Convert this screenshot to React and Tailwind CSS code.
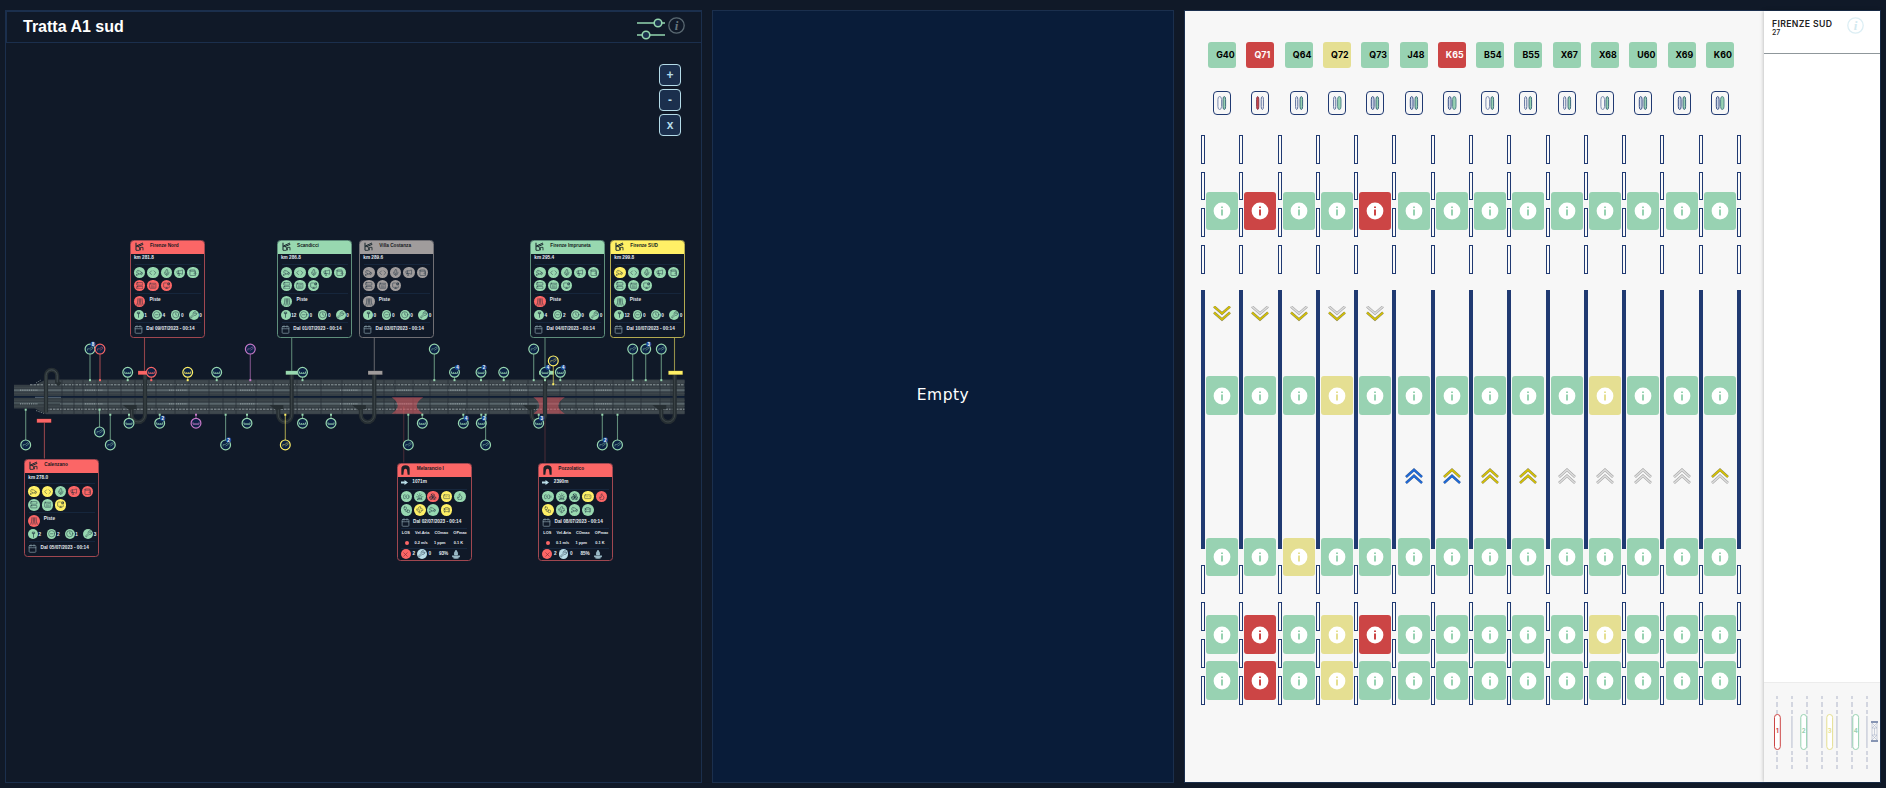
import React from "react";
import {
  Cctv, Code, Mic, Megaphone, Wallet, Server, Keyboard, MonitorCog, Clock, Wrench,
  CircleMinus, Calendar, BatteryCharging, Siren, Boxes, RectangleEllipsis, Flame,
  Workflow, Fan, CarFront, X,
} from "lucide-react";

const HEX = { g: "#98d8b0", r: "#fb6666", y: "#fff066", n: "#a09c9c", p: "#c678c8" };
const FILL = { g: "bg-[#98d8b0]", r: "bg-[#fb6666]", y: "bg-[#fff066]", n: "bg-[#a09c9c]", b: "bg-[#b9dde8]" };
const EDGE = { g: "border-[#5f8f7c]", r: "border-[#a04750]", y: "border-[#b3aa50]", n: "border-[#706f74]" };

const GATES = [
  { x: 130, y: 240, c: "r", name: "Firenze Nord", km: "km 281.8", icons: "gggggrrr", road: "r", counts: [1, 4, 0, 0], date: "09/07/2023" },
  { x: 277, y: 240, c: "g", name: "Scandicci", km: "km 286.8", icons: "gggggggg", road: "g", counts: [12, 0, 0, 0], date: "01/07/2023" },
  { x: 359.3, y: 240, c: "n", name: "Villa Costanza", km: "km 289.6", icons: "nnnnnnnn", road: "n", counts: [0, 0, 0, 0], date: "03/07/2023" },
  { x: 530.3, y: 240, c: "g", name: "Firenze Impruneta", km: "km 295.4", icons: "gggggggg", road: "r", counts: [4, 2, 0, 0], date: "04/07/2023" },
  { x: 610.3, y: 240, c: "y", name: "Firenze SUD", km: "km 299.8", icons: "yggggggg", road: "g", counts: [12, 0, 0, 0], date: "10/07/2023" },
  { x: 24.3, y: 459.3, c: "r", name: "Calenzano", km: "km 278.0", icons: "yygrrggy", road: "r", counts: [2, 2, 1, 3], date: "05/07/2023" },
];
const TUNNELS = [
  { x: 396.8, y: 463.3, name: "Melarancio I", len: "1071m", icons: "ggryggygy", date: "02/07/2023", air: "0.2 m/s", pct: "93%" },
  { x: 538.3, y: 463.3, name: "Pozzolatico", len: "2390m", icons: "gggyryggg", date: "08/07/2023", air: "0.1 m/s", pct: "85%" },
];
const GATE_ICONS = [Cctv, Code, Mic, Megaphone, Wallet, Server, Keyboard, MonitorCog];
const TUNNEL_ICONS = [BatteryCharging, Siren, Boxes, RectangleEllipsis, Flame, Workflow, Fan, Cctv, CarFront];

function Dot({ c, icon: Icon, size = "size-[11.6px]" }) {
  return (
    <span className={`${FILL[c]} ${size} flex shrink-0 items-center justify-center rounded-full text-[#142838]/70`}>
      <Icon size={7.5} strokeWidth={2} />
    </span>
  );
}

function RoadIcon({ size = 8 }) {
  return (
    <svg width={size} height={size} viewBox="0 0 24 24" fill="none" stroke="currentColor" strokeWidth="2.4">
      <path d="M2 23Q6 14 6 1M8.500 23Q11 14 10 1M15.500 23Q13 14 14 1M22 23Q18 14 18 1" />
    </svg>
  );
}
function PoleIcon() {
  return (
    <svg width="7" height="7" viewBox="0 0 24 24" fill="none" stroke="currentColor" strokeWidth="3">
      <path d="M12 23V8M8 4h8v5H8z" />
    </svg>
  );
}
function GateGlyph() {
  return (
    <svg width="9" height="9" viewBox="0 0 27 27" className="text-[#1c2a30]">
      <path d="M3 2v23M3 13h8" fill="none" stroke="currentColor" strokeWidth="3.2" />
      <path d="M4 12 24 3M10 13 25 7" fill="none" stroke="currentColor" strokeWidth="3" />
      <path d="M8 14h4l3 10h-3M16 25v-9h8v9M3 25h9" fill="none" stroke="currentColor" strokeWidth="2.6" />
    </svg>
  );
}
function TunnelGlyph() {
  return (
    <svg width="9" height="10" viewBox="0 0 27 30">
      <path fill="#1c1f26" fillRule="evenodd" d="M1 29V12Q1 1 13.500 1T26 12V29H20L18 14Q13.500 8 9 14L7 29Z" />
    </svg>
  );
}

function CardShell({ item, c, glyph, children }) {
  return (
    <div
      className={`absolute flex h-[98.5px] w-[75px] flex-col overflow-hidden rounded-[3.5px] border ${EDGE[c]} bg-[#101928] text-[4.7px] leading-none font-bold text-[#e4eaf0]`}
      style={{ left: item.x - 6, top: item.y - 43.5 }}
    >
      <div className={`-mx-px -mt-px flex h-[14px] shrink-0 items-center ${FILL[c]} pl-[4.5px] text-[#141a22]`}>
        {glyph}
        <span className="ml-[6.5px]">{item.name}</span>
      </div>
      {children}
    </div>
  );
}

const RULE = "mx-[3.5px] border-t border-[#16263c]";

function GateCard({ g }) {
  return (
    <CardShell item={g} c={g.c} glyph={<GateGlyph />}>
      <div className="flex h-[10.5px] items-center pl-[3px]">{g.km}</div>
      <div className={RULE} />
      <div className="mt-[1.5px] grid grid-cols-[repeat(5,13.33px)] gap-y-[1.7px] pl-[2.9px]">
        {GATE_ICONS.map((I, i) => <Dot key={i} c={g.icons[i]} icon={I} />)}
      </div>
      <div className={`mt-[1.2px] ${RULE}`} />
      <div className="mt-[2.2px] flex items-center pl-[2.9px]">
        <span className={`${FILL[g.road]} flex size-[11.6px] items-center justify-center rounded-full text-[#142838]/70`}><RoadIcon /></span>
        <span className="-mt-[2px] ml-[4px]">Piste</span>
      </div>
      <div className="mt-[2.6px] grid grid-cols-[repeat(4,18.4px)] pl-[2.9px]">
        {[PoleIcon, CircleMinus, Clock, Wrench].map((I, i) => (
          <span key={i} className="flex items-center">
            <Dot c="g" icon={I} size="size-[9.8px]" />
            <span className="mt-[3px] ml-[0.5px]">{g.counts[i]}</span>
          </span>
        ))}
      </div>
      <div className={`mt-[2px] ${RULE}`} />
      <DateRow date={g.date} tall />
    </CardShell>
  );
}

function DateRow({ date, tall }) {
  return (
    <div className={`flex items-center pl-[2.8px] whitespace-nowrap ${tall ? "h-[13px]" : "h-[11px]"}`}>
      <Calendar size={9} strokeWidth={1.8} className="shrink-0 text-[#8aa3ad]" />
      <span className="ml-[3.5px]">Dal {date} - 00:14</span>
    </div>
  );
}

function TunnelCard({ t }) {
  return (
    <CardShell item={t} c="r" glyph={<TunnelGlyph />}>
      <div className="flex h-[12px] items-center pl-[3px]">
        <svg width="7" height="5" viewBox="0 0 14 10"><path d="M0 3h7V0l7 5-7 5V7H0z" fill="#b9dde8" /></svg>
        <span className="ml-[4.5px]">{t.len}</span>
      </div>
      <div className={RULE} />
      <div className="mt-[1px] grid grid-cols-[repeat(5,13.33px)] gap-y-[1.7px] pl-[2.9px]">
        {TUNNEL_ICONS.map((I, i) => <Dot key={i} c={t.icons[i]} icon={I} />)}
      </div>
      <div className="mt-[1.5px]"><DateRow date={t.date} /></div>
      <div className={RULE} />
      <div className="mt-[2px] flex justify-between px-[4px] text-[3.9px]">
        <span>LOS</span><span>Vel.Aria</span><span>COmax</span><span>OPmax</span>
      </div>
      <div className="mt-[6px] grid grid-cols-[10px_1fr_1fr_1fr] items-center pr-[3px] pl-[4px] text-center text-[3.9px]">
        <span className="mx-auto size-[4px] rounded-full bg-[#fb6666]" />
        <span>{t.air}</span><span>1 ppm</span><span>0.1 K</span>
      </div>
      <div className={`mt-[2.6px] ${RULE}`} />
      <div className="mt-[0.5px] flex items-center pl-[3px]">
        <span className="flex size-[9.8px] items-center justify-center rounded-full bg-[#fb6666] text-[#7e2733]"><X size={7} /></span>
        <span className="w-[6.5px] text-center">2</span>
        <Dot c="b" icon={Wrench} size="size-[9.8px]" />
        <span className="w-[6px] text-center">0</span>
        <span className="ml-[6px]">{t.pct}</span>
        <svg className="ml-[4px]" width="8" height="9" viewBox="0 0 16 18"><path d="M8 0Q13 6 11 10H5Q3 6 8 0ZM1 11v3q7 4 14 0v-3M3 17h10" fill="#b9dde8" stroke="#b9dde8" strokeWidth="1" fillOpacity=".8" /></svg>
      </div>
    </CardShell>
  );
}

/* kind: c = camera, s = sign; badge holds the number shown on the marker */
const PINS = [
  [90, 349.6, "g", "c", 380.5, 8], [100, 349.6, "r", "c", 380.5], [250.3, 349.6, "p", "c", 380.5],
  [434.3, 349.6, "g", "c", 380.5], [533.7, 349.6, "g", "c", 380.5], [632.7, 349.6, "g", "c", 380.5],
  [645.7, 349.6, "g", "c", 380.5, 3], [661.3, 349.6, "g", "c", 380.5],
  [127.7, 372.8, "g", "s", 380.5], [151.3, 372.8, "r", "s", 380.5], [187.7, 372.8, "y", "s", 380.5],
  [216.7, 372.8, "g", "s", 380.5], [302.5, 372.8, "g", "s", 380.5], [454.5, 372.8, "g", "s", 380.5, 4],
  [481, 372.8, "g", "s", 380.5, 2], [503.7, 372.8, "g", "s", 380.5], [545, 372.8, "g", "s", 380.5, 4],
  [560.3, 372.8, "g", "s", 380.5, 4], [553.3, 361.4, "y", "c", 384.5],
  [129, 423.7, "g", "s", 415], [159.7, 423.7, "g", "s", 415, 2], [196, 423.7, "p", "s", 415],
  [247, 423.7, "g", "s", 415], [302.5, 423.7, "g", "s", 415], [331, 423.7, "g", "s", 415],
  [422.3, 423.7, "g", "s", 415], [463.3, 423.7, "g", "s", 415, 4], [481.3, 423.7, "g", "s", 415, 2],
  [538.7, 423.7, "g", "s", 415, 3], [99.5, 432.4, "g", "c", 410],
  [25.7, 445.4, "g", "c", 410], [110.3, 445.4, "g", "c", 415], [225.6, 445.4, "g", "c", 415, 2],
  [285.3, 445.4, "y", "c", 415], [408.3, 445.4, "g", "c", 415], [485.6, 445.4, "g", "c", 415],
  [602.3, 445.4, "g", "c", 415, 2], [617.5, 445.4, "g", "c", 415],
];

function Pin({ p }) {
  const [x, y, c, kind, end, badge] = p;
  const col = HEX[c];
  return (
    <g>
      <line x1={x} x2={x} y1={y} y2={end} stroke={col} strokeOpacity=".6" strokeWidth="1.1" />
      <rect x={x - 1} y={end - 0.8} width="2" height="2" fill={col} />
      <circle cx={x} cy={y} r="4.9" fill="#0c2245" stroke={col} strokeWidth="1.2" />
      {kind === "s" ? (
        <path d={`M${x - 3} ${y - 0.8}v1.800h6v-1.800M${x - 1} ${y}v1M${x + 1} ${y}v1`} fill="none" stroke={col} strokeWidth=".8" />
      ) : (
        <path d={`M${x - 2.5} ${y + 1.5}v-1.800h2l2.500-2 1 1.500-3 2`} fill="none" stroke={col} strokeOpacity=".65" strokeWidth=".7" />
      )}
      {badge && (
        <g>
          <circle cx={x + 3} cy={y - 5} r="2.6" fill="#1c4a94" />
          <text x={x + 3} y={y - 3.4} textAnchor="middle" fontSize="4.5" fontWeight="700" fill="#fff">{badge}</text>
        </g>
      )}
    </g>
  );
}

const RAMPS = [145, 291.7, 374.3, 545, 674.7];
const BOOTHS = [
  [138, 371.3, "r", 144.5, 338, 372], [285.7, 371.3, "g", 291.7, 338, 372], [368, 371.3, "n", 374.3, 338, 372],
  [539, 371.3, "g", 545, 338, 372], [668.3, 371.3, "y", 674.5, 338, 372], [36.8, 419.3, "r", 44.4, 423, 459],
];
const SEAMS = [62, 74, 83, 97, 108, 121, 135, 156, 175, 189, 209, 223, 236, 256, 273, 297, 321, 342, 362, 384, 395, 413, 430, 448, 467, 489, 510, 528, 560, 576, 594, 613, 625, 641, 660, 671];

function RoadMap() {
  return (
    <svg className="absolute inset-0 h-full w-full" viewBox="6 43.500 695 739" fontFamily="Liberation Sans, sans-serif">
      <path d="M14 385.200H35L46 380H684.500V396.800H14Z" fill="#353e44" />
      <path d="M14 398H684.500V414.800H46L35 409H14Z" fill="#353e44" />
      <rect x="46" y="380.8" width="638.5" height="3" fill="#3f484e" />
      <rect x="46" y="411.2" width="638.5" height="3" fill="#3f484e" />
      <path d="M14 390.800H684.500M60 404.200H684.500" stroke="#59666b" strokeWidth="1.9" />
      <path d="M14 403.500H60" stroke="#59666b" strokeWidth="1.2" />
      <path d="M14 388H684.500M14 406.800H684.500M14 394H684.500M14 400.800H684.500" stroke="#3d464b" strokeWidth="1.6" />
      <path d="M30 385.300H684.500M46 409.700H684.500" stroke="#9aa5a8" strokeWidth=".9" strokeDasharray="2.5 1" />
      {[20, 85, 169, 240, 340, 395, 448, 510, 594].map((x) => (
        <path key={x} d={`M${x} 390.800h18M${x} 404.200h18`} stroke="#7f8b8f" strokeWidth="1.6" strokeDasharray="1.2 1" />
      ))}
      <path d="M14 397.400H684.500" stroke="#0b1c36" strokeWidth="1.3" />
      {SEAMS.map((x) => <path key={x} d={`M${x} 380V396.600M${x} 398.200V414.800`} stroke="#283139" strokeWidth=".8" />)}
      <path d="M36 383.500L41 380.500M36 411L44 414" stroke="#6a767a" strokeWidth="1" strokeDasharray="1.5 1" />
      <path d="M35 397.800H61" stroke="#6d7f8c" strokeWidth=".8" />

      {[391.7, 533.3].map((x) => (
        <path key={x} d={`M${x} 397.800H${x + 31.6}Q${x + 25} 402 ${x + 25} 406T${x + 31.6} 414.300H${x}Q${x + 6} 410 ${x + 6} 406T${x} 397.800Z`} fill="#d8545c" fillOpacity=".55" />
      ))}
      <path d="M403.700 407V463M545 407V463" stroke="#fb6666" strokeOpacity=".2" strokeWidth="1.3" />

      {RAMPS.map((x) => (
        <g key={x} fill="none">
          <path d={`M${x} 374V415.500a6.700 7 0 0 1-13.400 0V410l-3-2.500h8`} stroke="#262e32" strokeWidth="4.2" />
          <path d={`M${x} 374V415.500a6.700 7 0 0 1-13.400 0V410`} stroke="#41494c" strokeWidth=".9" />
        </g>
      ))}
      <g fill="none">
        <path d="M46 413V376a5.600 5.600 0 0 1 11.200 0V383l3 2" stroke="#262e32" strokeWidth="4.2" />
        <path d="M46 413V376a5.600 5.600 0 0 1 11.200 0V383" stroke="#4b5558" strokeWidth=".9" />
      </g>

      {BOOTHS.map(([x, y, c, lx, y1, y2]) => (
        <g key={lx}>
          <path d={`M${lx} ${y1}V${y2}`} stroke={HEX[c]} strokeOpacity=".55" strokeWidth="1.1" />
          <rect x={x} y={y} width="14.5" height="4" fill={HEX[c]} stroke="#000" strokeOpacity=".35" strokeWidth=".5" />
        </g>
      ))}
      {PINS.map((p, i) => <Pin key={i} p={p} />)}
    </svg>
  );
}

function MapPanel() {
  return (
    <section className="flex w-[697px] shrink-0 flex-col border border-[#1b2f4d] font-['Liberation_Sans',Arial,sans-serif]">
      <header className="flex h-[32px] shrink-0 items-center border-t border-b border-l border-[#1b2f4d] pr-[16px] pl-[16px]">
        <h1 className="text-[16px] leading-none font-bold text-white">Tratta A1 sud</h1>
        <svg className="mt-[3px] ml-auto" width="28" height="22" viewBox="0 0 28 22" fill="#1b2f4d" stroke="#93d5ae" strokeWidth="1.6">
          <path d="M0 5H28M0 17H28" />
          <circle cx="21" cy="5" r="3.8" />
          <circle cx="9" cy="17" r="3.8" />
        </svg>
        <svg className="-mt-[3px] ml-[3px]" width="17" height="17" viewBox="0 0 17 17">
          <circle cx="8.5" cy="8.5" r="7.7" fill="none" stroke="#5a6972" strokeWidth="1.3" />
          <text x="8.5" y="13" textAnchor="middle" fontFamily="Liberation Serif, serif" fontStyle="italic" fontWeight="700" fontSize="13" fill="#65757e">i</text>
        </svg>
      </header>
      <div className="relative grow">
        <RoadMap />
        {GATES.map((g) => <GateCard key={g.name} g={g} />)}
        {TUNNELS.map((t) => <TunnelCard key={t.name} t={t} />)}
        <div className="absolute top-[21px] right-[20px] flex flex-col gap-[3px]">
          {["+", "-", "x"].map((s) => (
            <button key={s} className="flex size-[22px] items-center justify-center rounded-[4px] border border-[#b4dbe8] bg-[#1b2f4d] text-[12px] leading-none font-bold text-[#b4dbe8]">{s}</button>
          ))}
        </div>
      </div>
    </section>
  );
}

const LANES = [
  { id: "G40", c: "g", t: "ggggg", m: "wg", down: "yy" },
  { id: "Q71", c: "r", t: "rggrr", m: "rn", down: "ny" },
  { id: "Q64", c: "g", t: "ggygg", m: "ng", down: "ny" },
  { id: "Q72", c: "y", t: "gygyy", m: "nG", down: "ny" },
  { id: "Q73", c: "g", t: "rggrg", m: "bg", down: "ny" },
  { id: "J48", c: "g", t: "ggggg", m: "bg", up: "bb" },
  { id: "K65", c: "r", t: "ggggg", m: "bG", up: "yb" },
  { id: "B54", c: "g", t: "ggggg", m: "wg", up: "yy" },
  { id: "B55", c: "g", t: "ggggg", m: "ng", up: "yy" },
  { id: "X67", c: "g", t: "ggggg", m: "ng", up: "nn" },
  { id: "X68", c: "g", t: "gygyg", m: "wg", up: "nn" },
  { id: "U60", c: "g", t: "ggggg", m: "bg", up: "nn" },
  { id: "X69", c: "g", t: "ggggg", m: "bg", up: "nn" },
  { id: "K60", c: "g", t: "ggggg", m: "bG", up: "yn" },
];
const TILE = { g: "bg-[#98d2b2]", r: "bg-[#cc4545]", y: "bg-[#e5df92]" };
const TILE_HEX = { g: "#98d2b2", r: "#cc4545", y: "#e5df92" };
const ARROW = { y: ["#d9c400", "#8f8a50"], n: ["#dcdcdc", "#a3a3a3"], b: ["#1a6be0", "#3d5f95"] };
/* capsule width, fill, stroke */
const CAPSULE = {
  w: [3.6, "#f7f7f7", "#6f80a8"],
  n: [2.2, "#f7f7f7", "#4a5f92"],
  b: [2.8, "#c9d2e4", "#2a447c"],
  r: [2.2, "#cc4545", "#7d3048"],
  g: [2.6, "#98d2b2", "#2f5c74"],
  G: [3.4, "#98d2b2", "#4c7f88"],
};

function Capsules({ kinds }) {
  return (
    <svg width="10" height="14" viewBox="0 0 10 14">
      {[...kinds].map((k, i) => {
        const [w, fill, stroke] = CAPSULE[k];
        return <rect key={i} x={(i ? 7.3 : 2.7) - w / 2} y=".5" width={w} height="13" rx={w / 2} ry="3" fill={fill} stroke={stroke} strokeWidth=".9" />;
      })}
    </svg>
  );
}

function Tile({ c, cls }) {
  return (
    <div className={`${TILE[c]} ${cls} flex w-[32px] shrink-0 items-center justify-center rounded-[3px]`}>
      <svg width="18" height="18" viewBox="0 0 18 18">
        <circle cx="9" cy="9" r="8.4" fill="#fff" />
        <path d="M8 4.500h2v1.500H8zM8 7.500h2v6H8z" fill={TILE_HEX[c]} />
      </svg>
    </div>
  );
}

function Chevrons({ colors, up }) {
  const d = up ? "M1 9 9 1.800 17 9" : "M1 .5 9 7.500 17 .5";
  return (
    <svg width="18" height="16" viewBox="0 0 18 16" fill="none">
      {[0, 1].map((i) => (
        <g key={i} transform={`translate(0 ${i * 6})`}>
          <path d={d} stroke={ARROW[colors[i]][1]} strokeWidth="2.6" />
          <path d={d} stroke={ARROW[colors[i]][0]} strokeWidth="1.6" />
        </g>
      ))}
    </svg>
  );
}

function Divider() {
  const seg = "w-[4px] shrink-0 border border-[#203a72] bg-[#fafafa]";
  return (
    <div className="flex w-[4px] shrink-0 flex-col pt-[124px]">
      <div className={`${seg} h-[29px]`} />
      <div className={`${seg} mt-[8px] h-[28px]`} />
      <div className={`${seg} mt-[8px] h-[29px]`} />
      <div className={`${seg} mt-[8px] h-[29px]`} />
      <div className="mt-[16px] h-[259px] w-[4px] shrink-0 bg-[#203a72]" />
      <div className={`${seg} mt-[16px] h-[29px]`} />
      <div className={`${seg} mt-[8px] h-[29px]`} />
      <div className={`${seg} mt-[8px] h-[29px]`} />
      <div className={`${seg} mt-[8px] h-[29px]`} />
    </div>
  );
}

function Lane({ lane }) {
  return (
    <div className="flex w-[34.29px] shrink-0 flex-col items-center pt-[31px]">
      <div className={`${TILE[lane.c]} flex h-[26px] w-[28px] shrink-0 items-center rounded-[3px] pl-[8px] text-[8.8px] leading-none font-bold tracking-[0.01em] ${lane.c === "r" ? "text-white" : "text-black"}`}>{lane.id}</div>
      <div className="mt-[23px] flex h-[24px] w-[18px] shrink-0 items-center justify-center rounded-[4px] border border-[#203a72]">
        <Capsules kinds={lane.m} />
      </div>
      <Tile c={lane.t[0]} cls="mt-[77px] h-[38px]" />
      <div className="mt-[76px] h-[17px] shrink-0">{lane.down && <Chevrons colors={lane.down} />}</div>
      <Tile c={lane.t[1]} cls="mt-[53px] h-[39px]" />
      <div className="mt-[53px] h-[16px] shrink-0">{lane.up && <Chevrons colors={lane.up} up />}</div>
      <Tile c={lane.t[2]} cls="mt-[54px] h-[38px]" />
      <Tile c={lane.t[3]} cls="mt-[39px] h-[39px]" />
      <Tile c={lane.t[4]} cls="mt-[7px] h-[39px]" />
    </div>
  );
}

function LegendSketch() {
  const xs = [13, 28, 43, 58, 73, 88, 103];
  const pills = [[10, "#cc4545"], [36.3, "#98d2b2"], [62.3, "#e5df92"], [88.3, "#98d2b2"]];
  return (
    <svg width="116" height="99" viewBox="0 0 116 99" fontFamily="Inter, sans-serif">
      {xs.map((x, i) => (
        <g key={x} fill="#d3d6e0">
          {[[13, 3], [19, 5], [27, 4], [68, 4], [74, 5], [82, 4]].map(([y, h]) => <rect key={y} x={x - 1} y={y} width="2" height={h} />)}
          {i > 0 && <rect x={x - 1} y="33" width="1.8" height="32" />}
        </g>
      ))}
      {pills.map(([x, c], i) => (
        <g key={x}>
          <rect x={x + 0.5} y="31.5" width="5.8" height="35" rx="2.9" fill="#fff" stroke={c} />
          <text x={x + 3.4} y="50" textAnchor="middle" fontSize="6" fontWeight="700" fill={c}>{i + 1}</text>
        </g>
      ))}
      <g stroke="#a9b3c8" fill="none">
        <path d="M107 39h7M107 58h7" stroke="#8795b3" strokeWidth="2" />
        <path d="M108 40v17M113 40v17M108 45h5M108 52h5M108 40l5 5M113 40l-5 5M108 52l5 5M113 52l-5 5M110.500 45v7" strokeWidth=".6" />
      </g>
    </svg>
  );
}

function StationPanel() {
  return (
    <section className="flex w-[697px] shrink-0 border border-[#1b2f4d] bg-[#f7f7f7] font-['Inter',sans-serif]">
      <div className="flex grow overflow-hidden pl-[16px]">
        {LANES.map((l) => (
          <React.Fragment key={l.id}>
            <Divider />
            <Lane lane={l} />
          </React.Fragment>
        ))}
        <Divider />
      </div>
      <aside className="flex w-[116px] shrink-0 flex-col bg-white shadow-[0_0_4px_rgba(0,0,0,0.3)]">
        <div className="flex h-[43px] shrink-0 justify-between border-b border-[#8f979b] pt-[9px] pr-[16px] pl-[8px] text-[#222]">
          <div>
            <div className="text-[8.7px] leading-[9px] font-semibold tracking-[0.04em] whitespace-nowrap">FIRENZE SUD</div>
            <div className="text-[7px] leading-[8px] font-medium">27</div>
          </div>
          <svg className="-mt-[3px]" width="17" height="17" viewBox="0 0 17 17">
            <circle cx="8.5" cy="8.5" r="7.7" fill="none" stroke="#dceef4" strokeWidth="1.3" />
            <text x="8.5" y="13" textAnchor="middle" fontFamily="Liberation Serif, serif" fontStyle="italic" fontWeight="700" fontSize="13" fill="#d3e9f0">i</text>
          </svg>
        </div>
        <div className="grow" />
        <div className="h-[100px] shrink-0 border-t border-[#ececec] bg-[#f7f7f7]"><LegendSketch /></div>
      </aside>
    </section>
  );
}

export default function App() {
  return (
    <main className="flex h-[788px] w-[1886px] gap-[10px] overflow-hidden bg-[#101928] pt-[10px] pb-[5px] pl-[5px]">
      <MapPanel />
      <section className="flex w-[462px] shrink-0 items-center justify-center border border-[#1b2f4d] bg-[#091c39] pb-[2px] font-['DejaVu_Sans','Inter',sans-serif] text-[15.5px] tracking-[0.03em] text-white">
        Empty
      </section>
      <StationPanel />
    </main>
  );
}
